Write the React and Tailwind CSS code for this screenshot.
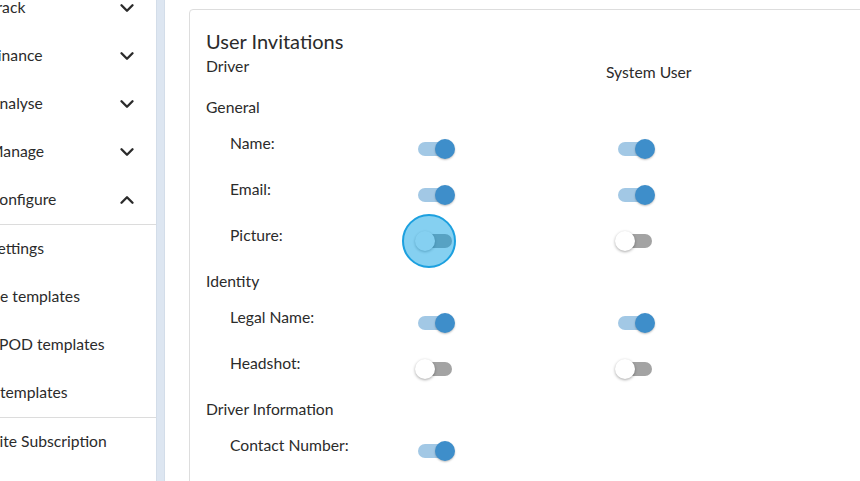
import { ChevronDown, ChevronUp } from 'lucide-react'

const navTop = [
  { label: 'Track', open: false },
  { label: 'Finance', open: false },
  { label: 'Analyse', open: false },
  { label: 'Manage', open: false },
  { label: 'Configure', open: true },
]

// the sidebar is scrolled sideways, so the first letters sit under the left edge
const navSub = [
  { label: 'Settings', shift: 'wide' },
  { label: 'e templates', shift: 'none' },
  { label: 'ePOD templates', shift: 'narrow' },
  { label: 'templates', shift: 'none' },
]

const shiftClass = {
  wide: '-ml-[11px] whitespace-nowrap',
  narrow: '-ml-[9px] whitespace-nowrap',
  none: 'whitespace-nowrap',
}

const sections = [
  {
    title: 'General',
    rows: [
      { label: 'Name:', driver: true, system: true },
      { label: 'Email:', driver: true, system: true },
      { label: 'Picture:', driver: false, system: false, focused: true },
    ],
  },
  {
    title: 'Identity',
    rows: [
      { label: 'Legal Name:', driver: true, system: true },
      { label: 'Headshot:', driver: false, system: false },
    ],
  },
  {
    title: 'Driver Information',
    rows: [{ label: 'Contact Number:', driver: true, system: null }],
  },
]

function Toggle({ on, focused }) {
  return (
    <div className="relative h-5 w-10 shrink-0">
      <div
        className={
          on
            ? 'absolute left-[3px] top-[3px] h-[14px] w-[34px] rounded-full bg-[#a2c8e5]'
            : 'absolute left-[3px] top-[3px] h-[14px] w-[34px] rounded-full bg-[#a3a3a3]'
        }
      />
      <div
        className={
          on
            ? 'absolute left-5 top-0 h-5 w-5 rounded-full bg-[#3e8eca] shadow-[0_1px_2px_rgba(0,0,0,0.25)]'
            : 'absolute left-0 top-0 h-5 w-5 rounded-full bg-white shadow-[0_1px_3px_rgba(0,0,0,0.35)]'
        }
      />
      {focused ? (
        <div className="absolute left-[-13px] top-[-17px] h-[54px] w-[54px] rounded-full border-2 border-[#1ca0df] bg-[#0ba1e4]/50" />
      ) : null}
    </div>
  )
}

function NavItem({ label, chevron, shift = 'wide' }) {
  return (
    <div className="flex h-12 items-center justify-between pr-[18px]">
      <span className={shiftClass[shift]}>{label}</span>
      {chevron === 'down' ? <ChevronDown size={22} strokeWidth={2.6} className="text-[#2b2b2b]" /> : null}
      {chevron === 'up' ? <ChevronUp size={22} strokeWidth={2.6} className="text-[#2b2b2b]" /> : null}
    </div>
  )
}

export default function App() {
  return (
    <div
      className="flex h-[481px] w-[860px] overflow-hidden bg-white text-[15.7px] text-[#2b2b2b]"
      style={{ fontFamily: 'Lato, "Open Sans", sans-serif' }}
    >
      <aside className="w-[156px] shrink-0 overflow-hidden">
        <div className="-mt-4">
          {navTop.map((item) => (
            <NavItem key={item.label} label={item.label} chevron={item.open ? 'up' : 'down'} />
          ))}
          <div className="border-t border-[#dcdcdc]">
            {navSub.map((item) => (
              <NavItem key={item.label} label={item.label} shift={item.shift} />
            ))}
          </div>
          <div className="border-t border-[#dcdcdc]">
            <NavItem label="Site Subscription" shift="narrow" />
          </div>
        </div>
      </aside>

      <div className="w-[9px] shrink-0 border-x border-[#d3dde9] bg-[#dde6f1]" />

      <main className="min-w-0 flex-1 pl-6 pt-[9px]">
        <div className="h-[600px] w-[760px] rounded-tl-[4px] border border-[#dddddd] pl-4 pt-[19px]">
          <h2 className="text-[20px] leading-6">User Invitations</h2>
          <div className="mt-[3px] flex items-start leading-5">
            <span className="w-[400px]">Driver</span>
            <span className="mt-[6px]">System User</span>
          </div>

          <div className="mt-[15px]">
            {sections.map((section) => (
              <div key={section.title}>
                <div className="h-9 leading-5">{section.title}</div>
                {section.rows.map((row) => (
                  <div key={row.label} className="flex h-[46px] items-start">
                    <span className="ml-6 w-[185px] leading-5">{row.label}</span>
                    <div className="mt-[6px] flex items-start">
                      <Toggle on={row.driver} focused={row.focused} />
                      {row.system !== null ? (
                        <div className="ml-[160px]">
                          <Toggle on={row.system} />
                        </div>
                      ) : null}
                    </div>
                  </div>
                ))}
              </div>
            ))}
          </div>
        </div>
      </main>
    </div>
  )
}
